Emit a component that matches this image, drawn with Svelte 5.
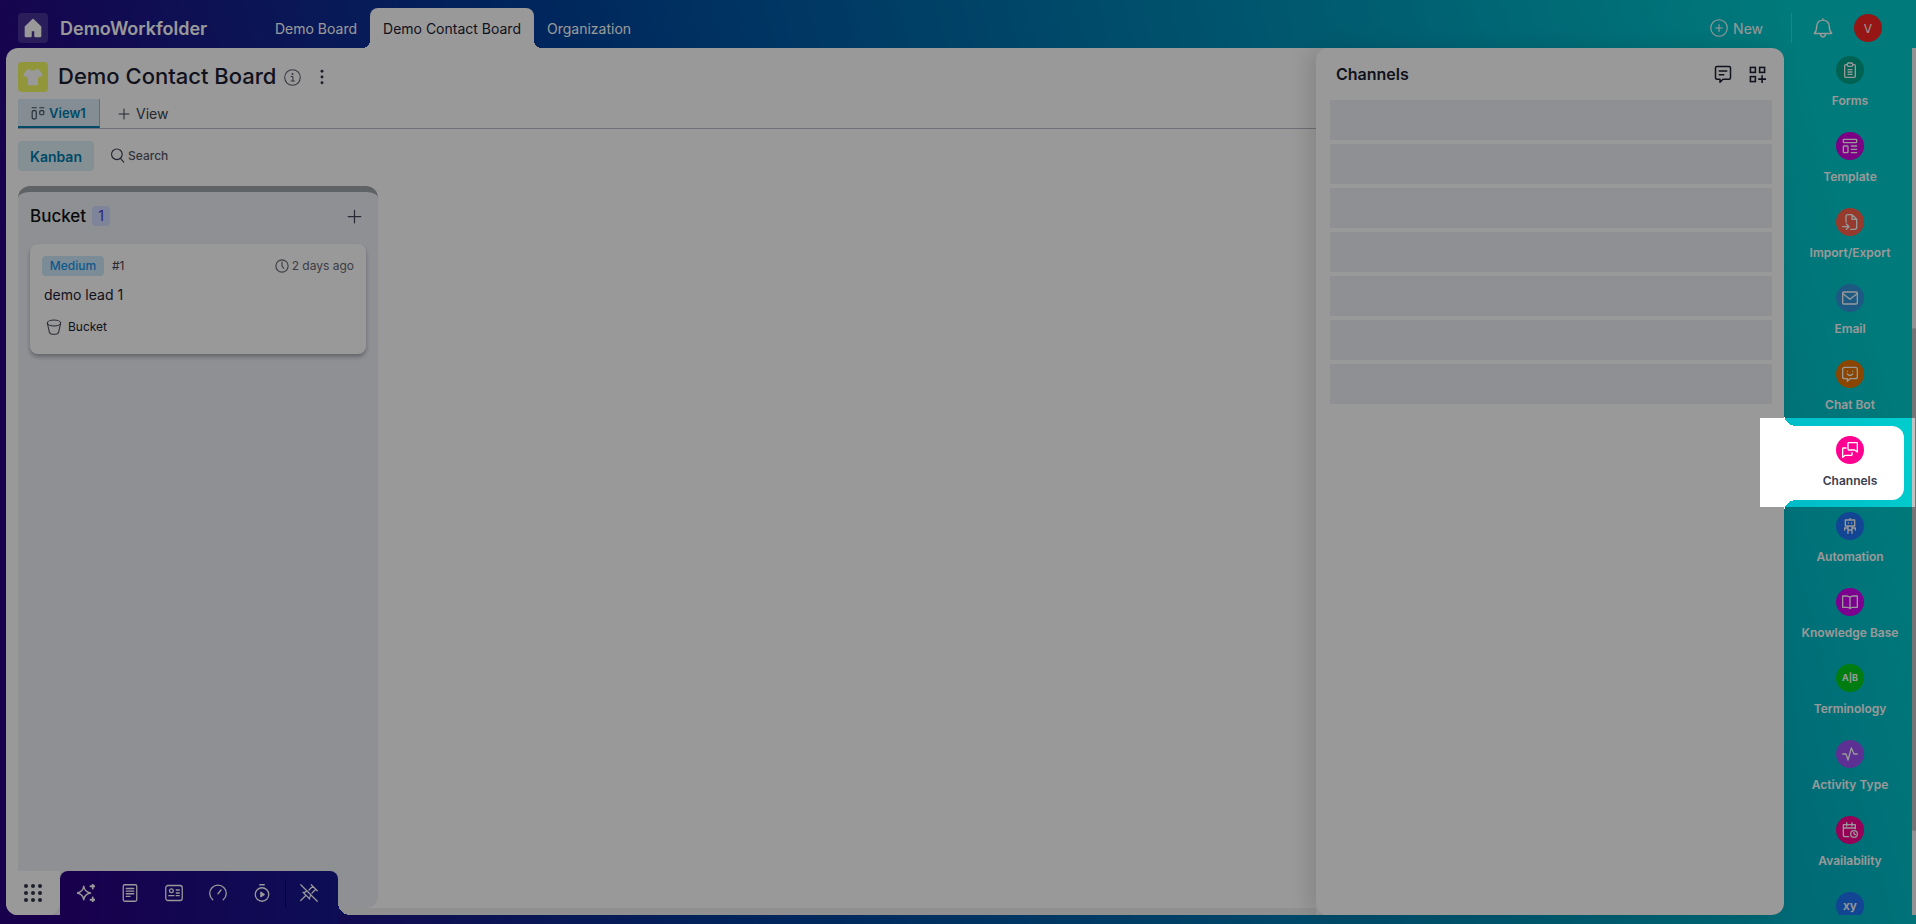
<script lang="ts">
  type Tool = { name: string; label: string; color: string };

  const boards = ["Demo Board", "Demo Contact Board", "Organization"];
  let current = $state("Demo Contact Board");
  let query = $state("");
  let activeTool = $state("channels");

  const tools: Tool[] = [
    { name: "forms", label: "Forms", color: "#00a389" },
    { name: "template", label: "Template", color: "#ce00da" },
    { name: "transfer", label: "Import/Export", color: "#f9614b" },
    { name: "mail", label: "Email", color: "#2f97dc" },
    { name: "bot", label: "Chat Bot", color: "#e67500" },
    { name: "channels", label: "Channels", color: "#ff0090" },
    { name: "robot", label: "Automation", color: "#1f74f5" },
    { name: "book", label: "Knowledge Base", color: "#ce00f0" },
    { name: "ab", label: "Terminology", color: "#00cf1c" },
    { name: "pulse", label: "Activity Type", color: "#9b51f5" },
    { name: "calendar", label: "Availability", color: "#f80090" },
    { name: "xy", label: "", color: "#1f74f5" },
  ];

  const dock = [
    { name: "sparkle", label: "Assistant" },
    { name: "notes", label: "Notes" },
    { name: "contact", label: "Contacts" },
    { name: "gauge", label: "Dashboard" },
    { name: "timer", label: "Timer" },
  ];

  const placeholders = Array.from({ length: 7 }, (_, i) => i);
</script>

{#snippet icon(name: string, size: number)}
  <svg
    width={size}
    height={size}
    viewBox="0 0 24 24"
    fill="none"
    stroke="currentColor"
    stroke-width="2"
    stroke-linecap="round"
    stroke-linejoin="round"
    aria-hidden="true"
  >
    {#if name === "home"}
      <path d="M12 2 L3 10.500 V22 H9.500 V15 H14.500 V22 H21 V10.500 Z" fill="currentColor" />
    {:else if name === "shirt"}
      <path d="M8 2 C9 5 15 5 16 2 L20 4 L24 10 L19 13 L18 11 V22 H6 V11 L5 13 L0 10 L4 4 Z" fill="currentColor" stroke="none" />
    {:else if name === "info"}
      <g stroke-width="1.500"><circle cx="12" cy="12" r="11" /><path d="M10 10.500 H12.500 V17 M10 17 H15" /></g>
      <circle cx="12" cy="7" r="1.400" fill="currentColor" stroke="none" />
    {:else if name === "dots"}
      <g fill="currentColor" stroke="none"><circle cx="12" cy="3.500" r="2.200" /><circle cx="12" cy="12" r="2.200" /><circle cx="12" cy="20.500" r="2.200" /></g>
    {:else if name === "kanban"}
      <g stroke-width="2"><path d="M2 3 H9 M15 3 H22" /><rect x="2" y="8" width="7" height="14" rx="2" /><rect x="15" y="8" width="7" height="7" rx="2" /></g>
    {:else if name === "plus"}
      <path d="M12 2 V22 M2 12 H22" />
    {:else if name === "search"}
      <g stroke-width="1.800"><circle cx="11" cy="10" r="8.500" /><path d="M17 17 L22 22.500" /></g>
    {:else if name === "clock"}
      <circle cx="12" cy="12" r="10.500" /><path d="M12 5 V12 L15 16" />
    {:else if name === "bucket"}
      <g stroke-width="1.600"><ellipse cx="12" cy="6" rx="10" ry="4.500" /><path d="M2 6 L5 19.500 Q6 23 9 23 H15 Q18 23 19 19.500 L22 6" /></g>
    {:else if name === "new"}
      <g stroke-width="1.500"><circle cx="12" cy="12" r="11" /><path d="M12 7.500 V16.500 M7.500 12 H16.500" /></g>
    {:else if name === "bell"}
      <g stroke-width="1.700"><path d="M1.500 18.500 C4 16 4.500 14 4.500 9.500 C4.500 5.500 8 2.500 12 2.500 C16 2.500 19.500 5.500 19.500 9.500 C19.500 14 20 16 22.500 18.500 Z M12 2.500 V1" /><path d="M9 19 C9 24 15 24 15 19" /></g>
    {:else if name === "message"}
      <path d="M4 2 H20 Q22 2 22 4 V17 Q22 19 20 19 H12 L8 23 V19 H4 Q2 19 2 17 V4 Q2 2 4 2 Z M7 8 H17 M7 13 H13" />
    {:else if name === "grid-add"}
      <g stroke-linecap="butt" stroke-linejoin="miter" stroke-width="2.200"><rect x="2" y="2" width="7" height="7" /><rect x="15" y="2" width="7" height="7" /><rect x="2" y="15" width="7" height="7" /><path d="M18.500 13 V24 M13 18.500 H24" /></g>
    {:else if name === "forms"}
      <path d="M8 4 H5.500 Q4 4 4 5.500 V21.500 Q4 23 5.500 23 H18.500 Q20 23 20 21.500 V5.500 Q20 4 18.500 4 H16" /><rect x="8" y="1.500" width="8" height="5" rx="2" /><path d="M9 11.500 H15 M9 15 H15 M9 18.500 H15" />
    {:else if name === "template"}
      <rect x="2" y="2" width="20" height="5" rx="1" /><rect x="2" y="12" width="7" height="10" rx="1" /><path d="M14 12 H22 M14 17 H22 M14 22 H22" />
    {:else if name === "transfer"}
      <path d="M6 12 V4 Q6 1 9 1 H15 L22 8 V20 Q22 23 19 23 H13 M15 1 V8 H22 M1 19 H10 M6.500 15 L10.500 19 L6.500 23" />
    {:else if name === "mail"}
      <rect x="1" y="3" width="22" height="18" rx="2" /><path d="M2 6 L12 14 L22 6" />
    {:else if name === "bot"}
      <path d="M4 2 H20 Q23 2 23 5 V16 Q23 19 20 19 H12 L8 23 V19 H4 Q1 19 1 16 V5 Q1 2 4 2 Z M8 8 H8.100 M16 8 H16.100 M8 12 Q12 16.500 16 12" />
    {:else if name === "channels"}
      <path d="M10 1 H22 Q23 1 23 2 V15 L19 12 H10 Q9 12 9 11 V2 Q9 1 10 1 Z M6 9 H2 Q1 9 1 10 V23 L5 20 H14 Q15 20 15 19 V16" />
    {:else if name === "robot"}
      <path d="M12 0 V3 M5 3 H19 V12 H5 Z M9.500 7.500 H9.600 M14.500 7.500 H14.600 M9 12 V23 M15 12 V23 M9 18 H15 M9 15 H4 V18 M15 15 H20 V18" />
    {:else if name === "book"}
      <path d="M12 5 Q10 3 7 3 H1 V20 H8 Q11 20 12 22 Q13 20 16 20 H23 V3 H17 Q14 3 12 5 V22" />
    {:else if name === "pulse"}
      <path d="M1 12 H6 L9 21 L14 3 L18 12 H23" />
    {:else if name === "calendar"}
      <path d="M10 22 H5 Q2 22 2 19 V4 H20 V10 M2 9 H20 M7 1 V6 M15 1 V6" /><circle cx="18" cy="18" r="5" /><path d="M18 15.500 V18 L20 19" />
    {:else if name === "sparkle"}
      <path d="M9 3 Q10 10.500 18 12 Q10 13.500 9 21 Q8 13.500 0 12 Q8 10.500 9 3 Z" /><path d="M21 0 V6 M18 3 H24 M21 18 V24 M18 21 H24" stroke-width="2.400" />
    {:else if name === "notes"}
      <g stroke-width="1.700"><rect x="3" y="1" width="18" height="22" rx="2" /><path d="M7 6 H17 M7 9.500 H17 M7 13 H17 M7 16.500 H12" /></g>
    {:else if name === "contact"}
      <g stroke-width="1.700"><rect x="1" y="2" width="22" height="20" rx="3" /><circle cx="8.500" cy="9" r="2.500" /><path d="M15 8 H19 M15 12 H19 M5 15.500 H12 M15 15.500 H19" /></g>
    {:else if name === "gauge"}
      <path d="M5 21 A11 11 0 1 1 19 21 M12 13 L16 8" stroke-width="1.700" />
    {:else if name === "timer"}
      <g stroke-width="1.700"><circle cx="12" cy="14" r="9" /><path d="M9 1 H15" /><path d="M10.500 11 L15 14 L10.500 17 Z" fill="currentColor" /></g>
    {:else if name === "unpin"}
      <g stroke-width="1.600"><path d="M1 1 L23 23 M1 22 L8 15 M4 11 L13 20 M5 12 Q8 9 10 10 M14 15 Q14 18 12 19 M12 8 L17 3 L21 7 L16 12 M15 1 L23 9" /></g>
    {/if}
  </svg>
{/snippet}

<div class="app">
  <header class="topbar">
    <button class="home" aria-label="Home">{@render icon("home", 20)}</button>
    <strong class="workspace">DemoWorkfolder</strong>
    <nav class="boards">
      {#each boards as board}
        <button class="board-tab" class:current={board === current} onclick={() => (current = board)}>
          {board}
        </button>
      {/each}
    </nav>
    <div class="account">
      <button class="new">{@render icon("new", 18)}New</button>
      <span class="rule"></span>
      <button class="bell" aria-label="Notifications">{@render icon("bell", 20)}</button>
      <button class="avatar" aria-label="Account">V</button>
    </div>
  </header>

  <div class="body">
    <main class="board">
      <div class="title-row">
        <span class="board-icon">{@render icon("shirt", 20)}</span>
        <h1>Demo Contact Board</h1>
        <button class="info" aria-label="Board info">{@render icon("info", 17)}</button>
        <button class="more" aria-label="More">{@render icon("dots", 16)}</button>
      </div>

      <div class="views">
        <button class="view selected">{@render icon("kanban", 14)}View1</button>
        <button class="view add">{@render icon("plus", 12)}View</button>
      </div>

      <div class="filters">
        <button class="mode">Kanban</button>
        <label class="search">
          {@render icon("search", 15)}
          <input type="text" placeholder="Search" aria-label="Search" bind:value={query} />
        </label>
      </div>

      <section class="column">
        <div class="column-head">
          <h2>Bucket</h2>
          <span class="count">1</span>
          <button class="add-card" aria-label="Add card">{@render icon("plus", 15)}</button>
        </div>
        <article class="card">
          <div class="card-meta">
            <span class="priority">Medium</span>
            <span class="number">#1</span>
            <span class="age">{@render icon("clock", 14)}2 days ago</span>
          </div>
          <p class="card-title">demo lead 1</p>
          <div class="stage">{@render icon("bucket", 16)}Bucket</div>
        </article>
      </section>
      <div class="board-scroll"></div>
    </main>

    <aside class="panel">
      <div class="panel-head">
        <h2>Channels</h2>
        <button aria-label="Messages">{@render icon("message", 18)}</button>
        <button aria-label="Add channel">{@render icon("grid-add", 17)}</button>
      </div>
      <div class="placeholders">
        {#each placeholders as p (p)}
          <div class="placeholder"></div>
        {/each}
      </div>
    </aside>

    <nav class="tools">
      {#each tools as tool (tool.name)}
        <button class="tool" class:active={tool.name === activeTool} onclick={() => (activeTool = tool.name)}>
          <span class="tool-icon" style="background:{tool.color}">
            {#if tool.name === "ab"}
              <b>A|B</b>
            {:else if tool.name === "xy"}
              <b class="xy">xy</b>
            {:else}
              {@render icon(tool.name, 16)}
            {/if}
          </span>
          {#if tool.label}
            <span class="tool-label">{tool.label}</span>
          {/if}
        </button>
      {/each}
    </nav>
    <div class="scrollbar"><div class="thumb"></div></div>
  </div>

  <div class="dock">
    <button class="launcher" aria-label="Apps">
      {#each Array(9) as _}
        <i></i>
      {/each}
    </button>
    <div class="dock-bar">
      {#each dock as item (item.name)}
        <button aria-label={item.label}>{@render icon(item.name, 18)}</button>
      {/each}
      <span class="dock-rule"></span>
      <button aria-label="Unpin">{@render icon("unpin", 18)}</button>
    </div>
  </div>

  <div class="spotlight"></div>
</div>

<style>
  :global(body) {
    margin: 0;
  }

  .app {
    position: relative;
    z-index: 0;
    display: flex;
    flex-direction: column;
    height: 100vh;
    overflow: hidden;
    box-sizing: border-box;
    padding-bottom: 9px;
    background: linear-gradient(75deg, #2a0080 0%, #2a0080 8%, #00409b 36%, #00cbcd 94%);
    font-family: Inter, sans-serif;
    color: #1c2033;
  }
  button {
    display: flex;
    align-items: center;
    justify-content: center;
    padding: 0;
    border: none;
    background: none;
    font: inherit;
    color: inherit;
    cursor: pointer;
  }
  svg {
    display: block;
    flex: none;
  }
  h1,
  h2,
  p {
    margin: 0;
  }

  .topbar {
    display: flex;
    align-items: center;
    flex: 0 0 48px;
    box-sizing: border-box;
    padding: 8px 34px 0 18px;
    color: #fff;
  }
  .home {
    width: 30px;
    height: 30px;
    border-radius: 4px;
    background: rgba(255, 255, 255, 0.16);
  }
  .workspace {
    width: 190px;
    margin: 0 12px;
    font-size: 18px;
    font-weight: 600;
  }
  .boards {
    display: flex;
    align-self: stretch;
  }
  .board-tab {
    position: relative;
    padding: 0 13px;
    border-radius: 8px 8px 0 0;
    font-size: 14px;
  }
  .board-tab.current {
    background: #fff;
    color: #1c2033;
  }
  .board-tab.current::before,
  .board-tab.current::after {
    content: "";
    position: absolute;
    bottom: 0;
    width: 8px;
    height: 8px;
  }
  .board-tab.current::before {
    right: 100%;
    background: radial-gradient(circle at 0 0, transparent 8px, #fff 8px);
  }
  .board-tab.current::after {
    left: 100%;
    background: radial-gradient(circle at 100% 0, transparent 8px, #fff 8px);
  }
  .account {
    display: flex;
    align-items: center;
    margin-left: auto;
  }
  .new {
    gap: 5px;
    font-size: 14px;
  }
  .rule {
    width: 1px;
    height: 30px;
    margin: 0 21px 0 28px;
    background: rgba(255, 255, 255, 0.25);
  }
  .bell {
    margin-right: 21px;
  }
  .avatar {
    width: 28px;
    height: 28px;
    border-radius: 50%;
    background: #fa2525;
    font-size: 12px;
  }

  .body {
    display: flex;
    flex: 1;
    min-height: 0;
    padding-left: 6px;
  }
  .board {
    flex: 1;
    min-width: 0;
    display: flex;
    flex-direction: column;
    box-sizing: border-box;
    padding-top: 14px;
    overflow: hidden;
    border-radius: 12px 0 0 12px;
    background: #fff;
  }
  .title-row {
    display: flex;
    align-items: center;
    height: 30px;
    padding: 0 12px;
  }
  .board-icon {
    display: grid;
    place-items: center;
    width: 30px;
    height: 30px;
    border-radius: 4px;
    background: #f3fb62;
    color: #fff;
  }
  h1 {
    margin-left: 10px;
    padding-bottom: 2px;
    font-size: 22px;
    font-weight: 500;
    line-height: 28px;
  }
  .info {
    margin: 0 12px 0 8px;
    color: #5c5f6b;
  }
  .more {
    width: 18px;
    color: #30344a;
  }
  .views {
    display: flex;
    height: 30px;
    margin: 7px 0 0 12px;
    border-bottom: 1px solid #b9bac6;
    box-sizing: border-box;
  }
  .view {
    gap: 4px;
    font-size: 13px;
    color: #3f4352;
  }
  .view.selected {
    box-sizing: border-box;
    width: 82px;
    border-right: 1px solid #a9b5c3;
    border-bottom: 2px solid #007bac;
    background: #dcebf5;
    font-weight: 600;
    color: #007bac;
  }
  .view.selected svg {
    color: #3f4f60;
  }
  .view.add {
    margin-left: 18px;
    gap: 6px;
    font-size: 14px;
  }
  .filters {
    display: flex;
    gap: 16px;
    margin-top: 12px;
    padding: 0 12px;
  }
  .mode {
    width: 76px;
    height: 30px;
    border-radius: 4px;
    background: #ddf1f5;
    color: #007bac;
    font-size: 14px;
    font-weight: 600;
  }
  .search {
    display: flex;
    align-items: center;
    gap: 3px;
    height: 28px;
    color: #3a3e50;
  }
  .search input {
    width: 160px;
    padding: 0;
    border: none;
    outline: none;
    background: none;
    font: 500 12px Inter, sans-serif;
  }
  .search input::placeholder {
    color: #555866;
  }

  .column {
    flex: 1;
    width: 360px;
    box-sizing: border-box;
    margin: 15px 12px 0;
    padding: 0 12px;
    border-top: 6px solid #a0a5ab;
    border-radius: 12px;
    background: #eff1f7;
  }
  .column-head {
    display: flex;
    align-items: center;
    height: 48px;
    margin-bottom: 4px;
  }
  .column-head h2 {
    font-size: 17px;
    font-weight: 500;
    color: #111;
  }
  .count {
    margin-left: 6px;
    width: 18px;
    border-radius: 4px;
    background: #d3dcff;
    color: #4b35d9;
    font-size: 14px;
    line-height: 20px;
    text-align: center;
  }
  .add-card {
    margin: 0 4px 0 auto;
    color: #44475a;
  }
  .card {
    height: 110px;
    box-sizing: border-box;
    padding: 12px;
    border-radius: 8px;
    background: #fff;
    box-shadow: 0 3px 4px rgba(40, 44, 60, 0.35);
  }
  .card-meta {
    display: flex;
    align-items: center;
    font-size: 12px;
    line-height: 20px;
  }
  .priority {
    width: 62px;
    border-radius: 4px;
    background: #cdeafb;
    color: #1594e8;
    font-weight: 500;
    text-align: center;
  }
  .number {
    margin-left: 8px;
    color: #3f4352;
  }
  .age {
    display: flex;
    align-items: center;
    gap: 3px;
    margin-left: auto;
    color: #666975;
  }
  .card-title {
    margin: 8px 0 10px 2px;
    font-size: 14px;
    line-height: 22px;
  }
  .stage {
    display: flex;
    align-items: center;
    gap: 6px;
    padding-left: 4px;
    font-size: 12px;
    line-height: 22px;
  }
  .stage svg {
    color: #44475a;
  }
  .board-scroll {
    flex: 0 0 7px;
    background: #f0f0f0;
  }

  .panel {
    position: relative;
    flex: 0 0 468px;
    box-sizing: border-box;
    padding: 0 12px 0 14px;
    border-radius: 12px;
    background: #fff;
    box-shadow: -8px 0 20px rgba(0, 0, 0, 0.12);
  }
  /* the board runs on under the panel's left corners */
  .panel::before {
    content: "";
    position: absolute;
    z-index: -1;
    inset: 0 50% 0 0;
    background: #fff;
  }
  .panel-head {
    display: flex;
    align-items: center;
    gap: 17px;
    height: 52px;
    padding: 0 6px;
  }
  .panel-head h2 {
    flex: 1;
    font-size: 16px;
    font-weight: 600;
  }
  .placeholders {
    display: flex;
    flex-direction: column;
    gap: 4px;
  }
  .placeholder {
    height: 40px;
    background: #eef0f6;
  }

  .tools {
    position: relative;
    flex: 0 0 128px;
    overflow: hidden;
  }
  .tool {
    position: relative;
    flex-direction: column;
    justify-content: flex-start;
    gap: 9px;
    box-sizing: border-box;
    width: 120px;
    height: 74px;
    margin-bottom: 2px;
    padding: 10px 0 0 12px;
    color: #fff;
  }
  .tool:first-child {
    margin-top: -2px;
  }
  .tool.active {
    z-index: 1;
    border-radius: 0 12px 12px 0;
    background: #fff;
    color: #3a3e50;
  }
  .tool.active::before,
  .tool.active::after {
    content: "";
    position: absolute;
    left: 0;
    width: 12px;
    height: 12px;
  }
  .tool.active::before {
    bottom: 100%;
    background: radial-gradient(circle at 100% 0, transparent 12px, #fff 12px);
  }
  .tool.active::after {
    top: 100%;
    background: radial-gradient(circle at 100% 100%, transparent 12px, #fff 12px);
  }
  .tool-icon {
    display: grid;
    place-items: center;
    width: 28px;
    height: 28px;
    border-radius: 50%;
    color: #fff;
  }
  .tool-icon b {
    font-size: 9px;
    line-height: 12px;
  }
  .tool-icon .xy {
    font-size: 12px;
    font-weight: 600;
  }
  .tool-label {
    font-size: 12px;
    font-weight: 600;
    line-height: 16px;
    white-space: nowrap;
  }
  .scrollbar {
    display: flex;
    flex-direction: column;
    flex: 0 0 4px;
    background: #f3f3f3;
  }
  .thumb {
    height: 58%;
    margin-top: 280px;
    border-radius: 2px;
    background: #c1c1c1;
  }

  .dock {
    position: absolute;
    left: 6px;
    bottom: 0;
    display: flex;
    height: 53px;
  }
  .launcher {
    display: grid;
    grid-template-columns: repeat(3, 4px);
    gap: 3px;
    place-content: center;
    width: 54px;
    height: 44px;
    border-radius: 0 0 12px 12px;
    background: #fff;
  }
  .launcher i {
    width: 4px;
    height: 4px;
    border-radius: 50%;
    background: #30344a;
  }
  .dock::before {
    content: "";
    position: absolute;
    z-index: -1;
    left: 0;
    bottom: 0;
    width: 60px;
    height: 32px;
    background: #2a0080;
  }
  .dock-bar {
    position: relative;
    display: flex;
    align-items: center;
    gap: 26px;
    height: 44px;
    padding: 0 20px 9px 17px;
    border-radius: 8px 8px 0 0;
    background: linear-gradient(90deg, #2a0080, #15188f);
    color: #fff;
  }
  .dock-bar::after {
    content: "";
    position: absolute;
    left: 100%;
    bottom: 9px;
    width: 12px;
    height: 12px;
    background: radial-gradient(circle at 100% 0, transparent 12px, #15188f 12px);
  }
  .dock-rule {
    width: 1px;
    height: 28px;
    margin: 0 -12px;
    background: #10004f;
  }

  .spotlight {
    position: absolute;
    right: 1px;
    top: 418px;
    width: 155px;
    height: 89px;
    box-shadow: 0 0 0 2000px rgba(0, 0, 0, 0.4);
    pointer-events: none;
  }
</style>
